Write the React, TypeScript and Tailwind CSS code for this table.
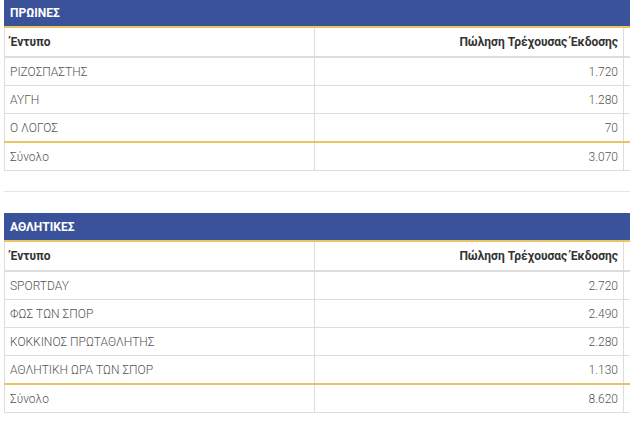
import React from "react";

type Section = {
  title: string;
  rows: { name: string; value: string }[];
  total: string;
};

const sections: Section[] = [
  {
    title: "ΠΡΩΙΝΕΣ",
    rows: [
      { name: "ΡΙΖΟΣΠΑΣΤΗΣ", value: "1.720" },
      { name: "ΑΥΓΗ", value: "1.280" },
      { name: "Ο ΛΟΓΟΣ", value: "70" },
    ],
    total: "3.070",
  },
  {
    title: "ΑΘΛΗΤΙΚΕΣ",
    rows: [
      { name: "SPORTDAY", value: "2.720" },
      { name: "ΦΩΣ ΤΩΝ ΣΠΟΡ", value: "2.490" },
      { name: "ΚΟΚΚΙΝΟΣ ΠΡΩΤΑΘΛΗΤΗΣ", value: "2.280" },
      { name: "ΑΘΛΗΤΙΚΗ ΩΡΑ ΤΩΝ ΣΠΟΡ", value: "1.130" },
    ],
    total: "8.620",
  },
];

function Row({ left, right, className, bold }: { left: string; right: string; className: string; bold?: boolean }) {
  const text = bold ? "font-bold text-[#333]" : "font-light text-[#555]";
  return (
    <div className={`flex h-[28px] ${className}`}>
      <div className={`w-[311px] border-x border-[#dddddd] pl-[5px] flex items-center text-[12px] ${text}`}>{left}</div>
      <div className={`w-[309px] border-r border-[#dddddd] pr-[5px] flex items-center justify-end text-[12px] ${text}`}>{right}</div>
      <div className="flex-1" />
    </div>
  );
}

function SalesTable({ section }: { section: Section }) {
  return (
    <div className="w-[700px]">
      {/* title bar */}
      <div className="h-[29px] bg-[#3a5299] border-b-2 border-[#e9c463] pl-[6px] flex items-center text-white font-bold text-[12px]">
        {section.title}
      </div>
      <Row left="Έντυπο" right="Πώληση Τρέχουσας Έκδοσης" className="border-b-2 border-[#dddddd] h-[30px]" bold />
      {section.rows.map((r, i) => (
        <Row
          key={r.name}
          left={r.name}
          right={r.value}
          className={i === section.rows.length - 1 ? "border-b-2 border-[#e9c463] h-[29px]" : "border-b border-[#dddddd]"}
        />
      ))}
      <Row left="Σύνολο" right={section.total} className="border-b border-[#dddddd]" />
    </div>
  );
}

export default function App() {
  return (
    <div className="w-[630px] h-[429px] overflow-hidden bg-white pl-[4px] font-['Roboto','Noto_Sans',sans-serif]">
      <div className="-mt-px">
        <SalesTable section={sections[0]} />
      </div>
      <div className="mt-[20px] mb-[21px] border-t border-[#e5e5e5] w-[700px]" />
      <SalesTable section={sections[1]} />
    </div>
  );
}
